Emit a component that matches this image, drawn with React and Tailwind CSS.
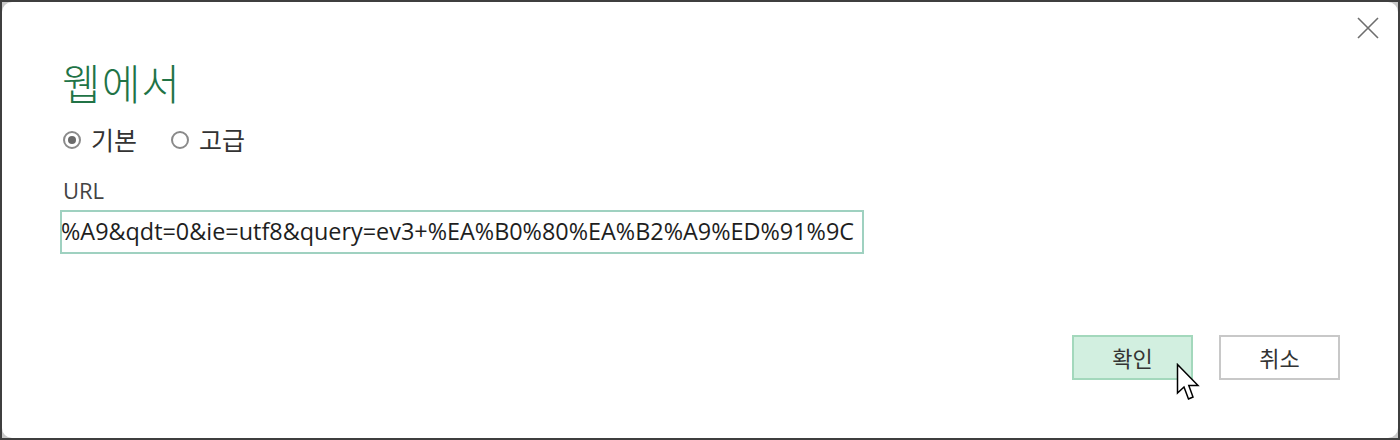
export default function App() {
  const kr = { fontFamily: '"Noto Sans CJK KR", "Noto Sans", sans-serif' };
  const latin = { fontFamily: '"Open Sans", "Noto Sans", sans-serif' };
  return (
    <div className="w-[1400px] h-[440px] bg-[#3f3f3f] p-[2px]">
      <div className="w-full h-full bg-[#c9c9c9] relative">
        <div className="w-full h-full bg-white rounded-[10px] relative flex flex-col pl-[58px] pr-[58px]" style={kr}>
          {/* close */}
          <button className="absolute top-[14px] right-[18px] w-[24px] h-[24px] flex items-center justify-center">
            <svg width="22" height="22" viewBox="0 0 22 22">
              <path d="M1 1L21 21M21 1L1 21" stroke="#6e6e6e" strokeWidth="1.6" />
            </svg>
          </button>

          <h1 className="mt-[54px] text-[42px] leading-[52px] font-light text-[#217346] tracking-[1px] pl-[2px]">웹에서</h1>

          <div className="mt-[17px] flex items-center h-[30px] text-[25px] text-[#333] pl-[3px]">
            <span className="w-[18px] h-[18px] rounded-full border-[2px] border-[#8a8a8a] flex items-center justify-center">
              <span className="w-[8px] h-[8px] rounded-full bg-[#6a6a6a]" />
            </span>
            <span className="ml-[10px]">기본</span>
            <span className="ml-[34px] w-[18px] h-[18px] rounded-full border-[2px] border-[#8a8a8a]" />
            <span className="ml-[10px]">고급</span>
          </div>

          <div className="mt-[21px] text-[22px] leading-[28px] text-[#444] pl-[3px]" style={latin}>
            URL
          </div>

          <div className="mt-[6px] w-[804px] h-[44px] border-[2px] border-[#9fd1c0] flex items-center overflow-hidden">
            <span className="whitespace-nowrap text-[23.4px] text-[#1e1e1e] -ml-[1px]" style={latin}>
              %A9&amp;qdt=0&amp;ie=utf8&amp;query=ev3+%EA%B0%80%EA%B2%A9%ED%91%9C
            </span>
          </div>

          <div className="mt-auto mb-[58px] flex justify-end gap-[26px]">
            <button className="w-[121px] h-[45px] bg-[#d2efe0] border-[2px] border-[#a3d8bc] text-[22px] text-[#333]">확인</button>
            <button className="w-[121px] h-[45px] bg-white border-[2px] border-[#c8c8c8] text-[22px] text-[#333]">취소</button>
          </div>

          {/* mouse cursor */}
          <svg className="absolute left-[1174px] top-[361px]" width="28" height="42" viewBox="0 0 28 42">
            <path d="M1.5 1.5L1.5 30L8 24L12.5 36L17 34L12.8 22.5L22 22.5Z" fill="white" stroke="black" strokeWidth="1.5" strokeLinejoin="miter" />
          </svg>
        </div>
      </div>
    </div>
  );
}
